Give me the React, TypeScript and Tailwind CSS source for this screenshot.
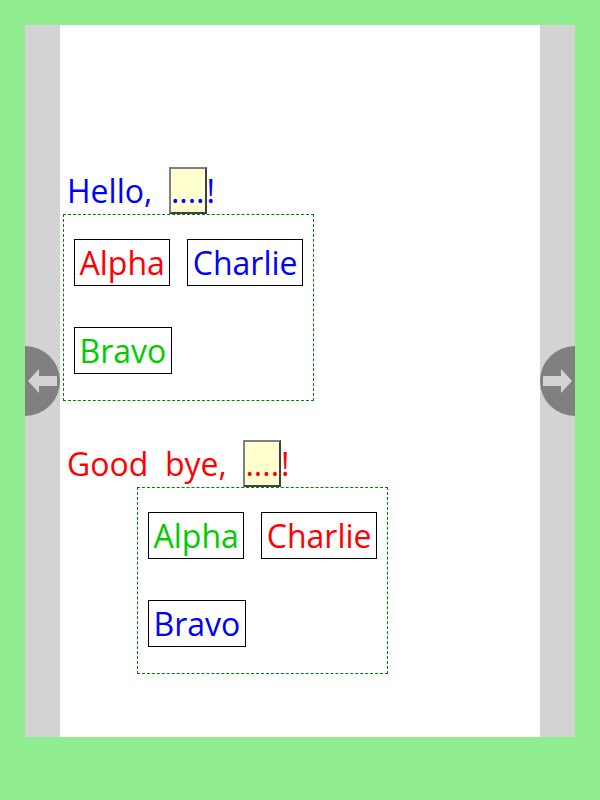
import React from "react";

const font = { fontFamily: '"Open Sans", "Noto Sans", sans-serif' };

function Item({ label, color }: { label: string; color: string }) {
  return (
    <div className={`h-[47px] border border-black px-[4.5px] flex items-center text-[32px] leading-[43px] ${color}`}>
      {label}
    </div>
  );
}

function Group({
  greeting,
  textColor,
  colors,
  boxClass,
}: {
  greeting: string;
  textColor: string;
  colors: [string, string, string];
  boxClass: string;
}) {
  return (
    <div>
      <div className={`flex items-baseline pl-[4px] text-[32px] leading-[43px] whitespace-pre ${textColor}`}>
        <span>{greeting}</span>
        <span className="inline-flex border-2 border-t-[#808080] border-l-[#808080] border-b-[#404040] border-r-[#404040] bg-[#ffffd0]">
          ....
        </span>
        <span>!</span>
      </div>
      <div className={`w-[251px] h-[187px] border border-dashed border-[#008000] pl-[10px] pt-[24px] ${boxClass}`}>
        <div className="flex gap-[17px]">
          <Item label="Alpha" color={colors[0]} />
          <Item label="Charlie" color={colors[1]} />
        </div>
        <div className="flex mt-[41px]">
          <Item label="Bravo" color={colors[2]} />
        </div>
      </div>
    </div>
  );
}

export default function App() {
  return (
    <div className="w-[600px] h-[800px] bg-[#90ee90] p-[25px]" style={font}>
      <div className="h-[712px] flex">
        <div className="w-[35px] bg-[#d3d3d3] flex items-center">
          <svg width="35" height="70" viewBox="0 0 35 70">
            <circle cx="0" cy="35" r="35" fill="#808080" />
            <polygon points="3,35 14,23 14,30 32,30 32,40 14,40 14,47" fill="#d3d3d3" />
          </svg>
        </div>
        <div className="flex-1 bg-white pl-[3px] pt-[142px]">
          <Group
            greeting={"Hello,  "}
            textColor="text-[#0000ff]"
            colors={["text-[#ff0000]", "text-[#0000ff]", "text-[#00cc00]"]}
            boxClass=""
          />
          <div className="mt-[39px]">
            <Group
              greeting={"Good  bye,  "}
              textColor="text-[#ff0000]"
              colors={["text-[#00cc00]", "text-[#ff0000]", "text-[#0000ff]"]}
              boxClass="ml-[74px]"
            />
          </div>
        </div>
        <div className="w-[35px] bg-[#d3d3d3] flex items-center">
          <svg width="35" height="70" viewBox="0 0 35 70">
            <circle cx="35" cy="35" r="35" fill="#808080" />
            <polygon points="32,35 21,23 21,30 3,30 3,40 21,40 21,47" fill="#d3d3d3" />
          </svg>
        </div>
      </div>
    </div>
  );
}
